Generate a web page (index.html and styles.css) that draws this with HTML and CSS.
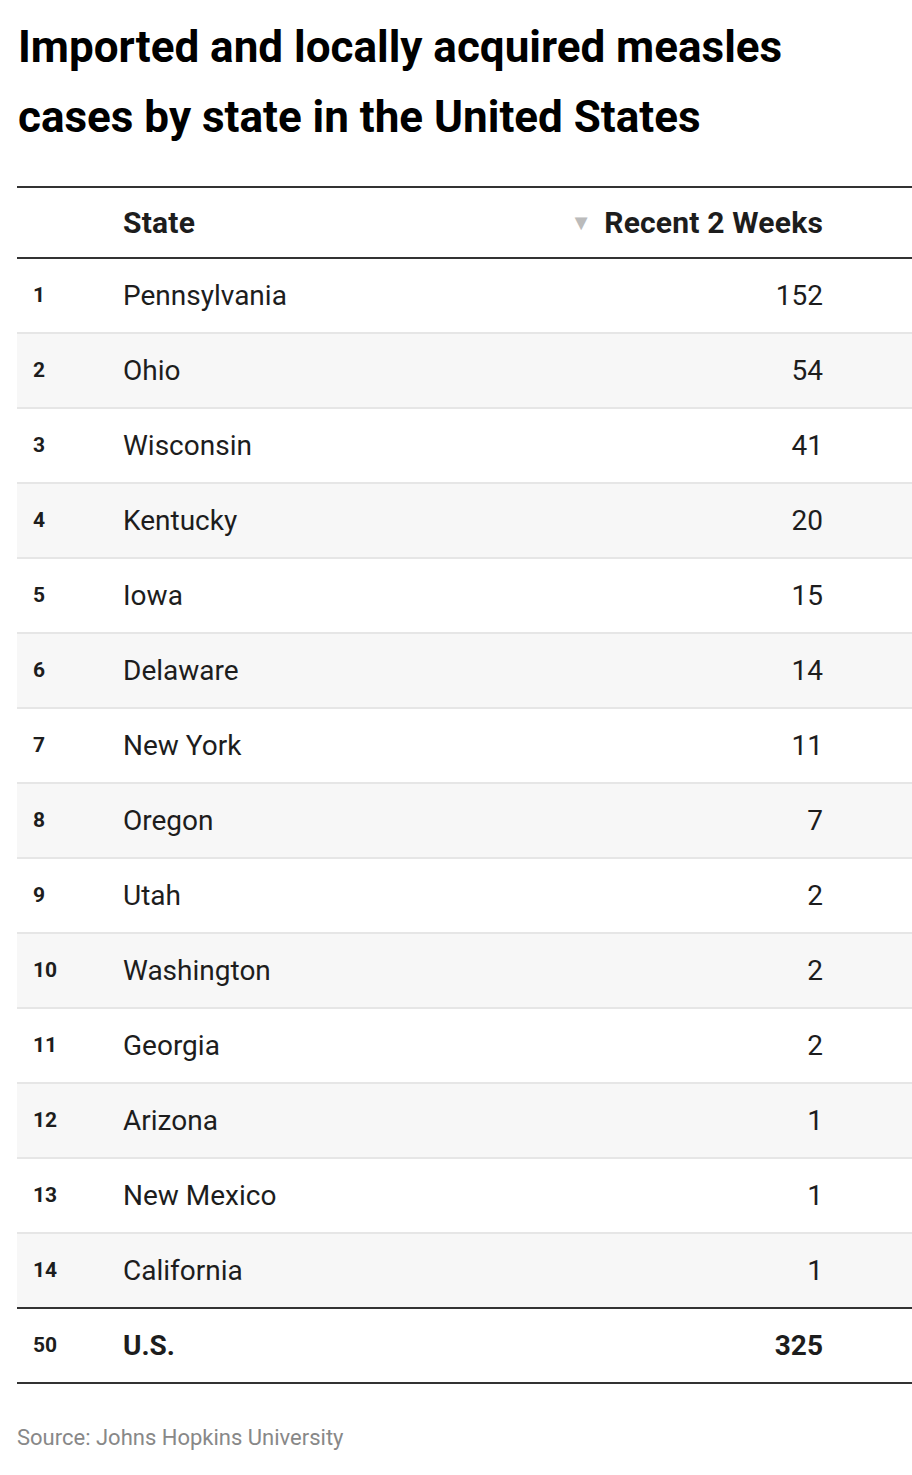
FILE: index.html
```html
<!DOCTYPE html>
<html>
<head>
<meta charset="utf-8">
<link rel="stylesheet" href="styles.css">
</head>
<body>
<div class="chart">
  <h1 class="title">Imported and locally acquired measles cases by state in the United States</h1>
  <table class="table">
    <thead>
      <tr>
        <th class="rank"></th>
        <th class="state">State</th>
        <th class="num"><span class="arrow">▼</span>Recent 2 Weeks</th>
      </tr>
    </thead>
    <tbody>
      <tr><td class="rank">1</td><td class="state">Pennsylvania</td><td class="num">152</td></tr>
      <tr><td class="rank">2</td><td class="state">Ohio</td><td class="num">54</td></tr>
      <tr><td class="rank">3</td><td class="state">Wisconsin</td><td class="num">41</td></tr>
      <tr><td class="rank">4</td><td class="state">Kentucky</td><td class="num">20</td></tr>
      <tr><td class="rank">5</td><td class="state">Iowa</td><td class="num">15</td></tr>
      <tr><td class="rank">6</td><td class="state">Delaware</td><td class="num">14</td></tr>
      <tr><td class="rank">7</td><td class="state">New York</td><td class="num">11</td></tr>
      <tr><td class="rank">8</td><td class="state">Oregon</td><td class="num">7</td></tr>
      <tr><td class="rank">9</td><td class="state">Utah</td><td class="num">2</td></tr>
      <tr><td class="rank">10</td><td class="state">Washington</td><td class="num">2</td></tr>
      <tr><td class="rank">11</td><td class="state">Georgia</td><td class="num">2</td></tr>
      <tr><td class="rank">12</td><td class="state">Arizona</td><td class="num">1</td></tr>
      <tr><td class="rank">13</td><td class="state">New Mexico</td><td class="num">1</td></tr>
      <tr><td class="rank">14</td><td class="state">California</td><td class="num">1</td></tr>
    </tbody>
    <tfoot>
      <tr><td class="rank">50</td><td class="state">U.S.</td><td class="num">325</td></tr>
    </tfoot>
  </table>
  <p class="source">Source: Johns Hopkins University</p>
</div>
</body>
</html>
```

FILE: styles.css
```css
html, body {
  margin: 0;
  padding: 0;
  background: #ffffff;
}

body {
  font-family: Roboto, "Liberation Sans", sans-serif;
  color: #1d1d1d;
}

.chart {
  padding: 12px 0 0 17px;
}

.title {
  margin: 0 0 34px 1px;
  font-size: 44px;
  line-height: 70px;
  font-weight: 700;
  color: #000000;
  max-width: 800px;
}

.table {
  width: 895px;
  border-collapse: collapse;
  border-spacing: 0;
}

.table th,
.table td {
  padding: 0;
  height: 73px;
  vertical-align: middle;
  font-size: 28px;
  line-height: 1;
}

.table thead tr {
  border-top: 2px solid #333333;
  border-bottom: 2px solid #333333;
}

.table thead th {
  height: 69px;
  font-size: 30px;
  font-weight: 700;
  text-align: left;
  color: #1d1d1d;
  letter-spacing: 0.2px;
}

.table tbody tr {
  border-bottom: 2px solid #e6e6e6;
}

.table tbody tr:nth-child(even) {
  background: #f7f7f7;
}

.table tbody tr:last-child {
  border-bottom: 2px solid #333333;
}

.table tfoot tr {
  border-bottom: 2px solid #333333;
}

.table tfoot td {
  font-weight: 700;
}

.table .rank {
  width: 106px;
  padding-left: 16px;
  font-size: 21px;
  font-weight: 700;
  box-sizing: border-box;
}

.table .state {
  text-align: left;
}

.table .num {
  text-align: right;
  padding-right: 89px;
}

.arrow {
  display: inline-block;
  font-size: 22px;
  color: #bbbbbb;
  margin-right: 12px;
  vertical-align: 3px;
}

.source {
  margin: 41px 0 0 0;
  font-size: 22px;
  color: #888888;
}
```
